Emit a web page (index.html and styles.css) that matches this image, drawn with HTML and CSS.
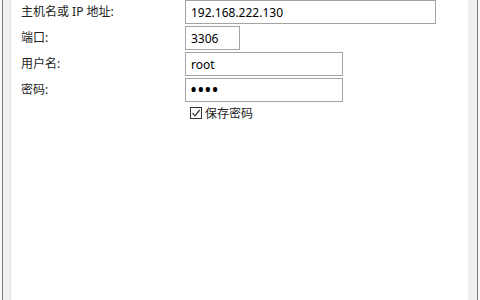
FILE: index.html
```html
<!DOCTYPE html>
<html lang="zh-CN">
<head>
  <meta charset="UTF-8">
  <title>连接</title>
  <link rel="stylesheet" href="styles.css">
</head>
<body>

  <div class="window">
    <div class="frame">
      <div class="panel">

        <div class="form">
          <label for="host">主机名或 IP 地址:</label>
          <input type="text" id="host" class="wide" value="192.168.222.130">

          <label for="port">端口:</label>
          <input type="text" id="port" class="short" value="3306">

          <label for="user">用户名:</label>
          <input type="text" id="user" class="mid" value="root">

          <label for="pass">密码:</label>
          <input type="password" id="pass" class="mid" value="1234">

          <span></span>
          <div class="check">
            <span class="box">
              <svg width="10" height="10" viewBox="0 0 10 10">
                <path d="M1.5 5.2 L4 7.8 L8.7 2" fill="none" stroke="#333" stroke-width="1.2"/>
              </svg>
            </span>
            <span>保存密码</span>
          </div>
        </div>

      </div>
    </div>
  </div>

</body>
</html>
```

FILE: styles.css
```css
body {
  margin: 0;
  font-family: 'Noto Sans', 'Noto Sans CJK SC', sans-serif;
  font-size: 12px;
  color: #222;
}

.window {
  display: flex;
  width: 480px;
  height: 300px;
  padding: 0 2px;
  box-sizing: border-box;
  background: #fafafa;
}

.frame {
  flex: 1;
  display: flex;
  border-left: 1px solid #7a7a7a;
  border-right: 1px solid #7a7a7a;
  background: #f0f0f0;
  padding: 0 9px 0 7px;
}

.panel {
  flex: 1;
  background: #fff;
  border-left: 1px solid #e2e2e2;
  padding-left: 10px;
}

.form {
  display: grid;
  grid-template-columns: 164px auto;
  row-gap: 2px;
  align-items: center;
  justify-items: start;
}

.form label {
  line-height: 24px;
}

.form input {
  height: 24px;
  box-sizing: border-box;
  margin: 0;
  padding: 0 5px;
  border: 1px solid #a4a4a4;
  font-family: 'Noto Sans', sans-serif;
  font-size: 12px;
  color: #000;
  outline: none;
}

.wide {
  width: 251px;
}

.short {
  width: 55px;
}

.mid {
  width: 158px;
}

.form #pass {
  font-size: 19px;
  padding: 0 4px;
}

.check {
  display: flex;
  align-items: center;
  gap: 3px;
  margin-left: 5px;
}

.box {
  display: flex;
  align-items: center;
  justify-content: center;
  width: 10px;
  height: 10px;
  border: 1px solid #333;
  background: #fff;
}
```
